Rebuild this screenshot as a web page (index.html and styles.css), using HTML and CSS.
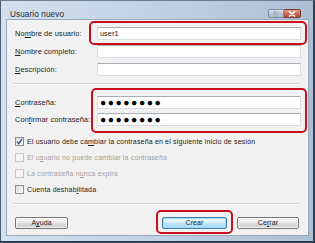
FILE: index.html
```html
<!DOCTYPE html>
<html lang="es">
<head>
<meta charset="utf-8">
<title>Usuario nuevo</title>
<link rel="stylesheet" href="styles.css">
</head>
<body>
<div class="window">
  <div class="titlebar">
    <span class="title">Usuario nuevo</span>
    <div class="caption-btns">
      <span class="cbtn help">?</span>
      <span class="cbtn close"><svg viewBox="0 0 8 6" width="8" height="6"><path d="M1.5 0.8 L6.5 5.2 M6.5 0.8 L1.5 5.2" stroke="#fff" stroke-width="1.6" stroke-linecap="round"/></svg></span>
    </div>
  </div>
  <div class="content">
    <div class="fields">
      <span class="lbl">No<u>m</u>bre de usuario:</span><div class="field">user1</div>
      <span class="lbl"><u>N</u>ombre completo:</span><div class="field"></div>
      <span class="lbl"><u>D</u>escripción:</span><div class="field"></div>
    </div>
    <div class="sep"></div>
    <div class="fields pw">
      <span class="lbl"><u>C</u>ontraseña:</span><div class="field dots">●●●●●●●●</div>
      <span class="lbl">Con<u>f</u>irmar contraseña:</span><div class="field dots">●●●●●●●●</div>
    </div>
    <div class="checks">
      <div class="chk"><span class="box checked"><svg viewBox="0 0 9 9" width="9" height="9"><path d="M2 4.6 L3.7 6.6 L7 1.8" fill="none" stroke="#2a5a9a" stroke-width="1.4"/></svg></span><span>El usuario debe ca<u>m</u>biar la contraseña en el siguiente inicio de sesión</span></div>
      <div class="chk disabled"><span class="box"></span><span>El u<u>s</u>uario no puede cambiar la contraseña</span></div>
      <div class="chk disabled"><span class="box"></span><span>La contraseña n<u>u</u>nca expira</span></div>
      <div class="chk"><span class="box"></span><span>Cuenta deshab<u>i</u>litada</span></div>
    </div>
    <div class="sep sep2"></div>
    <div class="buttons">
      <span class="btn ayuda">A<u>y</u>uda</span>
      <span class="btn default crear">Crear</span>
      <span class="btn cerrar">Ce<u>r</u>rar</span>
    </div>
  </div>
  <div class="mark m1"></div>
  <div class="mark m2"></div>
  <div class="mark m3"></div>
</div>
</body>
</html>
```
FILE: styles.css
```css
html, body {
  margin: 0;
  padding: 0;
  background: #ffffff;
}
body {
  font-family: "Liberation Sans", Arial, sans-serif;
  color: #1c1c1c;
}
u {
  text-decoration: underline;
  text-underline-offset: 1px;
}
.window {
  position: relative;
  width: 315px;
  height: 243px;
  box-sizing: border-box;
  border: 1px solid #6d7f93;
  border-right: 2px solid #2f3f52;
  border-bottom: 2px solid #2f3f52;
  border-left-color: #4a5c70;
  background: linear-gradient(90deg, #d3e0ee 0%, #c3d3e5 45%, #adbfd3 100%);
  padding: 0 4px 5px 5px;
  display: flex;
  flex-direction: column;
}
.titlebar {
  height: 18px;
  flex: none;
  display: flex;
  align-items: flex-start;
  justify-content: space-between;
}
.title {
  font-size: 8.2px;
  letter-spacing: 0.1px;
  padding-left: 4px;
  padding-top: 9px;
  color: #1e2a36;
  line-height: 9px;
}
.caption-btns {
  display: flex;
  margin-top: 8px;
  margin-right: 8px;
}
.cbtn {
  box-sizing: border-box;
  height: 9px;
  display: flex;
  align-items: center;
  justify-content: center;
  border: 1px solid #7d8ea3;
}
.help {
  width: 16px;
  border-radius: 2px 0 0 2px;
  background: linear-gradient(#dbe5f0, #b7c7d9 50%, #a7b9cd);
  font-size: 8px;
  font-weight: bold;
  line-height: 7px;
  color: #ffffff;
  text-shadow: 0 0 1px #24384e, 0 0 1px #24384e;
}
.close {
  width: 17px;
  border-left: none;
  border-color: #7a3a34;
  border-radius: 0 2px 2px 0;
  background: linear-gradient(#e3a194, #cc6a58 50%, #b94634);
}
.content {
  flex: 1;
  background: #f1f1f1;
  border: 1px solid #98a9bc;
  padding: 7px 7px 0 8px;
  display: flex;
  flex-direction: column;
}
.fields {
  display: grid;
  grid-template-columns: 82px 1fr;
  grid-auto-rows: 13px;
  row-gap: 5px;
}
.fields.pw {
  margin-top: 11px;
  row-gap: 4px;
}
.lbl {
  font-size: 7.4px;
  letter-spacing: 0.1px;
  align-self: center;
  white-space: nowrap;
}
.field {
  box-sizing: border-box;
  height: 13px;
  background: #ffffff;
  border: 1px solid #d8dce3;
  border-top-color: #a9adb5;
  font-size: 7.4px;
  line-height: 11px;
  padding-left: 2px;
}
.field.dots {
  font-size: 10.4px;
  letter-spacing: 1.5px;
  line-height: 11px;
  color: #000000;
  padding-left: 2px;
}
.sep {
  margin: 7px 2px 0 -1px;
  height: 0;
  border-top: 1px solid #d0d0d0;
  border-bottom: 1px solid #ffffff;
}
.sep2 {
  margin-top: 6px;
}
.checks {
  margin-top: 7px;
  display: flex;
  flex-direction: column;
}
.chk {
  height: 16px;
  display: flex;
  align-items: center;
  gap: 3px;
  font-size: 7px;
  letter-spacing: 0.17px;
  white-space: nowrap;
}
.chk.disabled {
  color: #a3a3a3;
}
.box {
  box-sizing: border-box;
  width: 9px;
  height: 9px;
  border: 1px solid #8e8f8f;
  background: linear-gradient(135deg, #dcdcdc, #fbfbfb);
  display: flex;
}
.box svg {
  margin: -1px;
}
.chk.disabled .box {
  border-color: #c8c8c8;
  background: #f4f4f4;
}
.buttons {
  margin-top: 12px;
  display: flex;
  align-items: center;
  padding-right: 2px;
}
.btn {
  box-sizing: border-box;
  height: 12px;
  border: 1px solid #777777;
  border-radius: 2px;
  background: linear-gradient(#f4f4f4 0%, #ebebeb 45%, #dddddd 50%, #cfcfcf 100%);
  box-shadow: inset 0 0 0 1px rgba(255,255,255,0.7);
  font-size: 7px;
  letter-spacing: 0.1px;
  line-height: 10px;
  text-align: center;
  color: #1a1a1a;
}
.ayuda {
  width: 53px;
  margin-right: auto;
}
.crear {
  width: 65px;
}
.cerrar {
  width: 62px;
  margin-left: 10px;
}
.btn.default {
  border-color: #3c7fb1;
  background: linear-gradient(#eaf6fd 0%, #d9f0fc 45%, #bee6fd 50%, #a7d9f5 100%);
  box-shadow: inset 0 0 0 1px #9fdcfa;
}
.mark {
  position: absolute;
  box-sizing: border-box;
  border: 2px solid #c8101f;
  border-radius: 5px;
}
.m1 {
  left: 88px;
  top: 20px;
  width: 218px;
  height: 24px;
}
.m2 {
  left: 90px;
  top: 87px;
  width: 216px;
  height: 45px;
}
.m3 {
  left: 155px;
  top: 209px;
  width: 77px;
  height: 24px;
}
```
